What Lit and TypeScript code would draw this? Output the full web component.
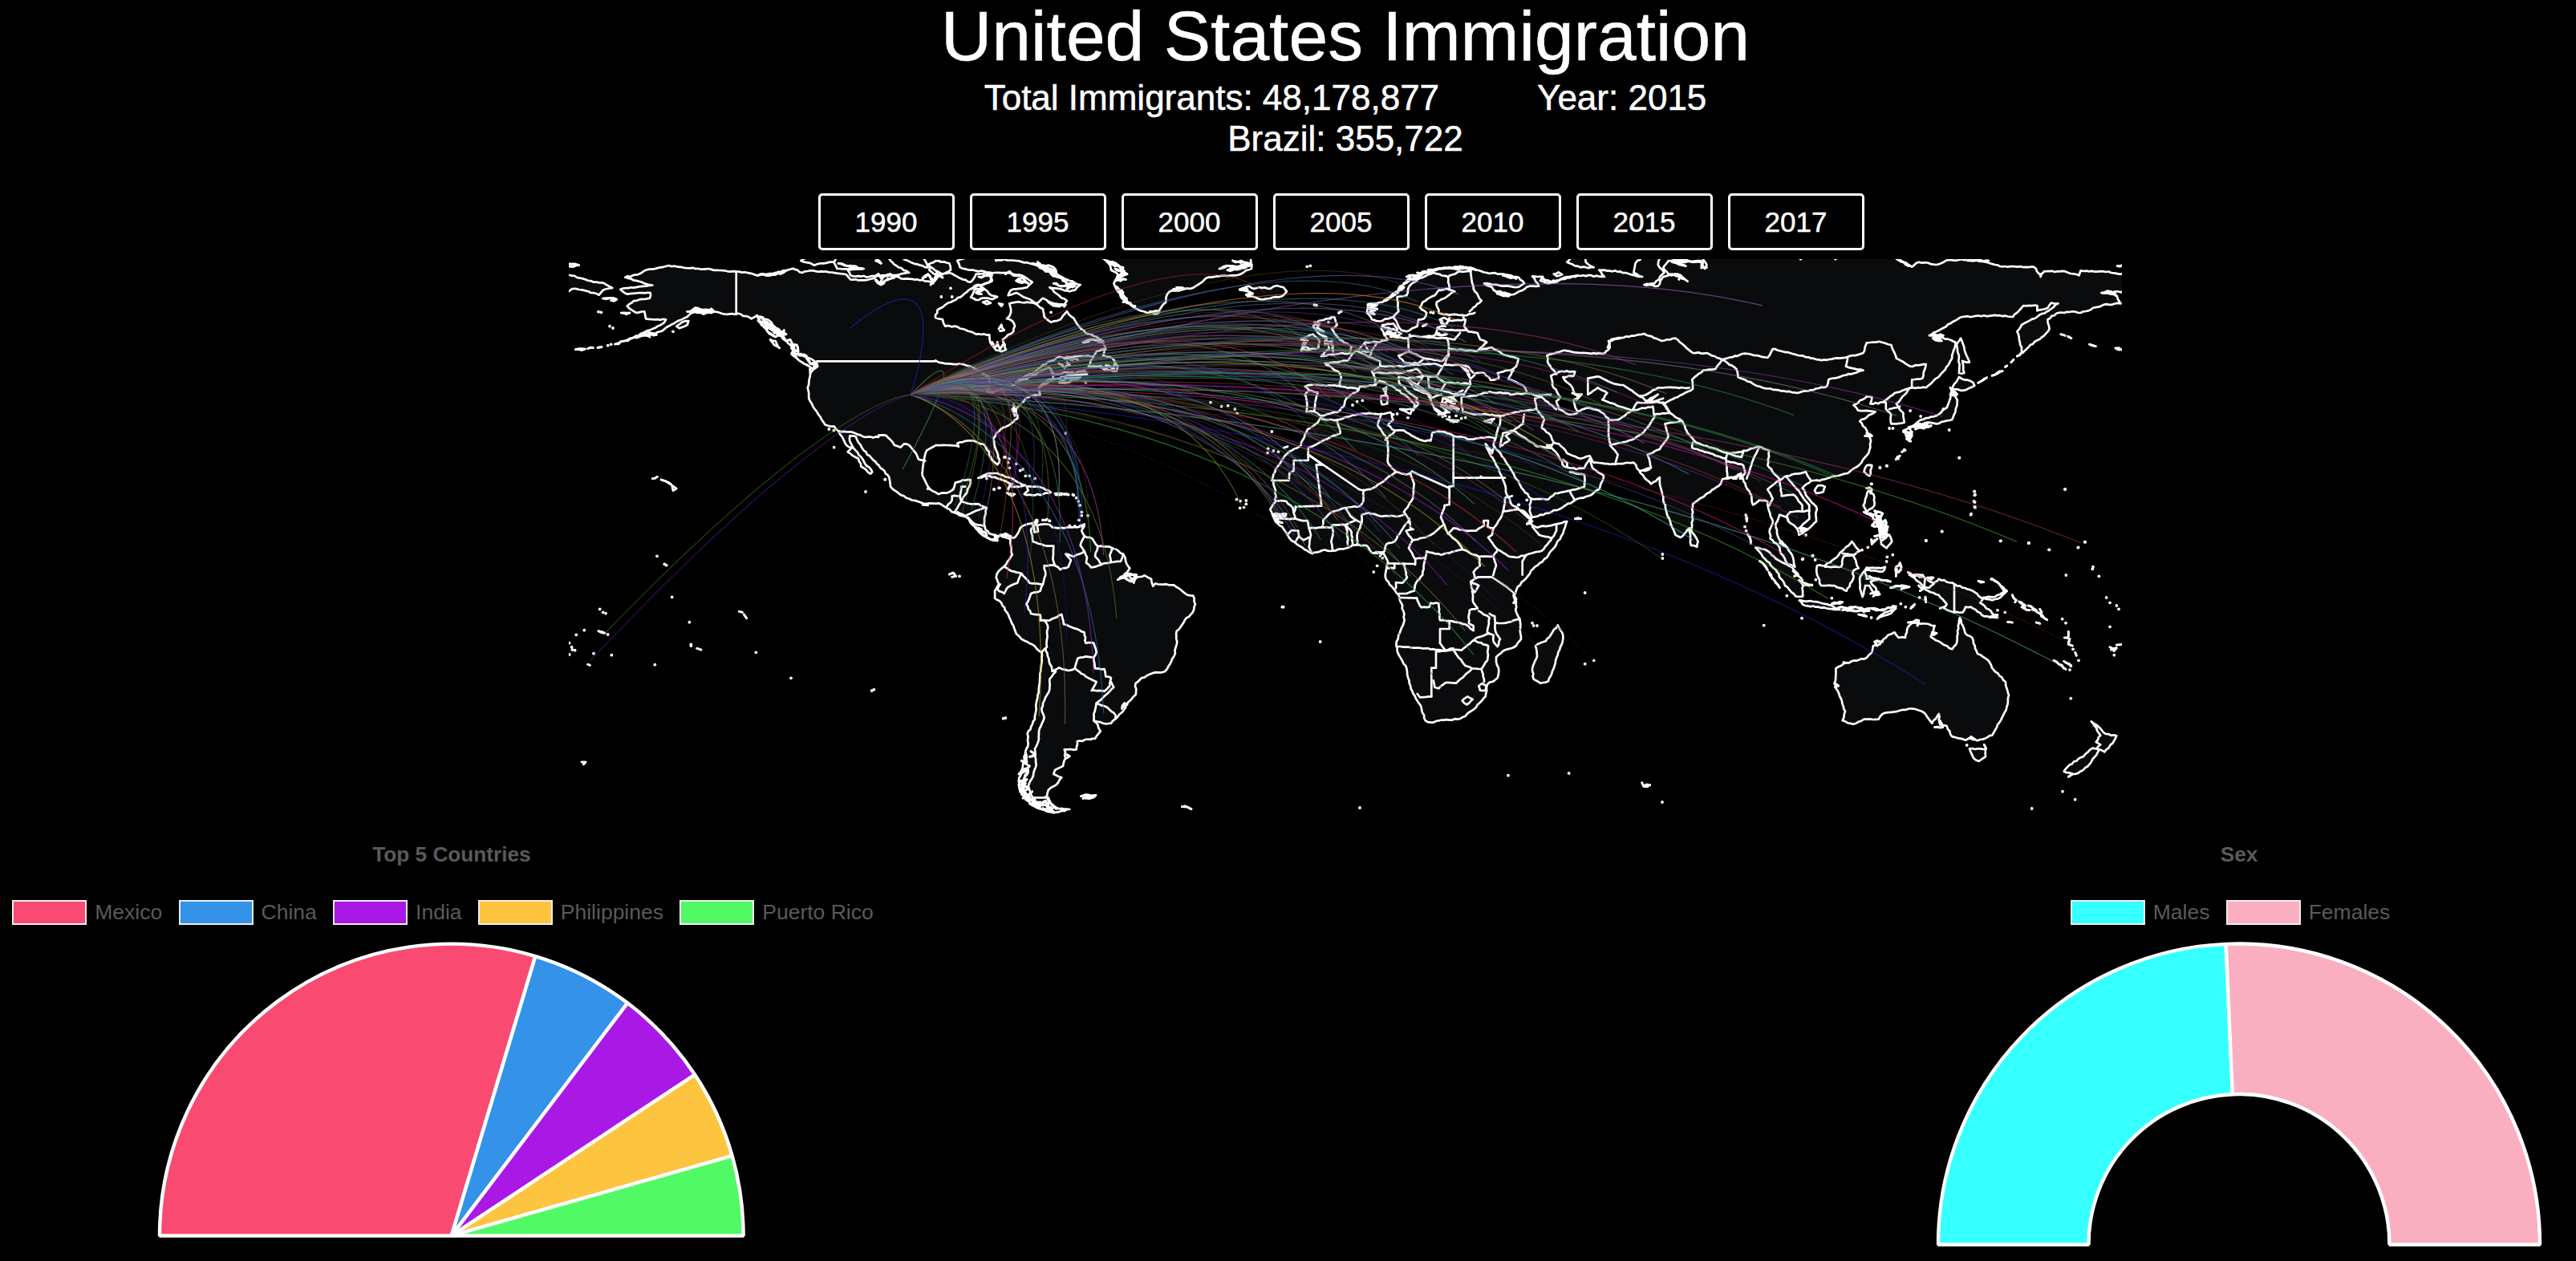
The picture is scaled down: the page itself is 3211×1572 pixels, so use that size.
import { LitElement, html, svg, css } from "lit";
import { customElement, property } from "lit/decorators.js";

/* Survey sheets: every outline is written in the coordinates of its sheet. */
type Sheet = { x: number; y: number; sx: number; sy: number };
const T = 1 / 3;
const SHEETS: Record<string, Sheet> = {
  A: { x: 690, y: 310, sx: T, sy: T },
  B: { x: 1100, y: 310, sx: T, sy: T },
  C: { x: 1520, y: 310, sx: T, sy: T },
  D: { x: 1980, y: 310, sx: 0.43367, sy: T },
  E: { x: 690, y: 600, sx: T, sy: T },
  F: { x: 1150, y: 600, sx: T, sy: T },
  G: { x: 1560, y: 550, sx: T, sy: T },
  H: { x: 2150, y: 540, sx: T, sy: T },
};

let seed = 7;
const rnd = () => {
  seed = (seed * 16807) % 2147483647;
  return seed / 2147483647;
};

function points(line: string): number[][] {
  let s = SHEETS.A;
  const out: number[][] = [];
  for (const tok of line.trim().split(/\s+/)) {
    if (SHEETS[tok]) {
      s = SHEETS[tok];
      continue;
    }
    const [a, b] = tok.split(",").map(Number);
    out.push([s.x + a * s.sx, s.y + b * s.sy]);
  }
  return out;
}

function trace(line: string, close: boolean, rough: number): string {
  const p = points(line);
  if (close) p.push(p[0]);
  let d = `M${p[0][0].toFixed(1)} ${p[0][1].toFixed(1)}`;
  for (let i = 1; i < p.length; i++) {
    const [x0, y0] = p[i - 1];
    const [x1, y1] = p[i];
    const len = Math.hypot(x1 - x0, y1 - y0);
    const n = rough && len < 90 ? Math.floor(len / 3.2) : 0;
    for (let k = 1; k < n; k++) {
      const t = k / n;
      const o = (rnd() - 0.5) * 2 * rough;
      const x = x0 + (x1 - x0) * t - ((y1 - y0) / len) * o;
      const y = y0 + (y1 - y0) * t + ((x1 - x0) / len) * o;
      d += `L${x.toFixed(1)} ${y.toFixed(1)}`;
    }
    d += `L${x1.toFixed(1)} ${y1.toFixed(1)}`;
  }
  return close ? d + "Z" : d;
}

const LAND = `
A 268,107 315,97 345,80 400,70 430,63 465,68 510,73 570,76 640,82 683,86 715,88 760,100 800,95 850,87 895,74 930,90 960,82 1000,85 1060,92 1095,97 1110,115 1160,118 1200,110 1220,130 1235,100 1270,98 1300,112 1360,115 1400,122 1420,130 1430,100 1480,90 B 270,100 300,115 330,125 350,95 385,90 410,95 400,125 350,140 330,150 300,175 265,195 235,210 205,230 198,258 225,265 235,290 270,290 310,303 350,320 400,322 403,350 425,380 445,385 462,378 450,340 470,322 490,310 495,290 485,270 465,262 480,240 475,205 500,200 540,200 570,205 600,225 605,255 630,275 665,265 690,235 715,260 735,290 760,315 800,330 825,345 835,375 820,385 790,400 750,402 700,405 660,405 630,420 600,435 570,460 530,480 500,500 545,483 600,455 625,445 640,475 690,460 700,470 650,488 620,490 600,505 585,520 590,545 555,550 535,560 520,580 500,600 505,635 480,655 450,670 425,690 415,710 420,740 432,770 438,790 430,808 410,790 398,760 380,732 350,722 320,718 280,728 285,740 240,735 200,735 165,755 155,790 150,850 165,880 185,905 210,918 250,910 265,900 272,875 300,865 330,865 325,890 310,920 295,945 330,955 360,955 390,970 383,1000 380,1030 385,1050 400,1065 430,1075 460,1065 485,1080 F 335,222 310,210 290,202 265,218 230,205 200,178 165,135 120,118 90,100 60,82 30,82 0,88 A 1400,960 1330,935 1290,915 1260,890 1255,855 1230,825 1195,790 1160,755 1140,725 1130,703 1108,700 1108,720 1130,755 1160,795 1192,835 1185,842 1150,815 1140,785 1100,760 1115,745 1095,735 1080,705 1065,682 1050,665 1015,658 990,620 970,590 955,560 950,520 960,465 960,440 930,425 890,395 900,370 870,345 850,310 800,265 760,250 740,262 700,245 630,243 590,232 540,225 500,255 450,280 400,310 350,325 300,332 370,300 415,275 420,265 380,265 345,262 340,235 310,240 285,225 275,215 300,195 360,185 362,165 330,165 275,170 250,152 290,145 345,140 370,137 330,125
A 40,92 57,98 100,110 130,120 150,125 190,130 220,147 185,155 170,173 130,160 95,153 70,150 57,160 40,160
B 425,45 455,40 500,45 550,55 590,60 625,75 660,100 700,120 740,135 720,155 700,160 660,150 625,145 660,175 690,195 680,212 640,205 600,185 575,205 540,185 500,165 470,175 480,155 540,145 560,125 530,105 490,95 450,90 420,90 380,85 330,80 290,70 280,45 320,30 420,30
A 1045,45 1060,75 1160,75 1100,80 1110,100 1180,105 1230,100 1290,98 1330,90 1290,70 1260,45 1250,30 1050,30
A 925,45 975,62 1010,55 1050,50 1060,30 950,30
A 1310,40 1370,62 1400,70 1390,45 1380,30 1310,30
A 1405,80 1430,97 1450,70 1480,68 1440,45 1415,60
B 330,182 350,150 380,150 400,170 430,180 410,190 380,185 350,192
B 375,200 390,195 405,203 390,208
B 435,205 450,208 445,215
B 200,45 250,55 255,80 225,95 190,75 170,60
B 770,440 785,410 800,385 830,375 825,400 860,410 880,440 875,458 830,455 820,440 790,440
B 820,30 850,60 855,80 880,95 865,130 880,160 900,190 930,212 960,230 1000,240 1030,243 1045,215 1060,200 1065,170 1090,150 1150,150 1180,135 1210,110 1260,103 1330,98 1380,75 1375,30
C 75,152 110,140 130,150 150,145 190,150 215,138 240,145 252,160 235,178 200,182 165,190 135,182 105,178 120,165
A 890,390 930,400 975,420 988,440 975,450 930,425
A 810,340 830,345 845,372 825,360
A 460,290 480,275 505,270 500,285 470,298
B 358,858 395,840 430,840 470,855 500,870 535,885 500,890 475,888 485,880 440,862 400,850
B 530,918 545,905 540,890 570,890 600,895 630,912 600,918 560,922
B 465,913 495,918 485,925
B 645,915 672,915 670,921 648,921
A 443,885 460,897 447,905
F 325,210 345,210 365,175 385,163 415,155 430,145 412,165 418,190 432,188 428,165 455,160 475,162 485,172 530,175 580,172 605,160 595,185 605,205 635,215 655,243 700,245 725,255 750,272 760,300 775,325 765,340 730,368 770,352 790,380 800,360 830,352 855,365 862,392 870,382 940,388 965,405 990,425 1012,428 1020,460 1010,490 980,520 960,552 950,560 950,610 940,655 920,690 905,712 860,718 820,735 797,755 797,798 770,825 745,865 720,890 705,905 675,905 640,895 655,910 665,935 645,962 578,972 575,1003 530,1003 535,1035 525,1065 495,1080 490,1095 520,1108 500,1135 470,1155 465,1180 480,1205 510,1225 550,1227 490,1240 430,1220 385,1190 365,1160 360,1120 375,1060 385,1010 395,980 392,945 420,890 425,830 437,760 445,680 445,640 410,610 370,590 350,570 340,540 315,490 295,455 270,437 270,410 285,385 275,360 285,335 305,318 335,275 330,240
C 378,632 368,650 330,675 312,715 305,735 255,765 235,790 210,825 198,862 210,905 210,945 190,975 200,1000 G 80,280 90,300 115,320 135,350 150,372 180,392 228,420 265,408 305,410 345,403 390,388 430,390 450,418 490,415 510,450 505,475 500,500 505,520 530,550 550,575 560,605 568,635 572,670 555,715 542,750 545,785 580,850 590,905 605,945 635,995 650,1045 670,1052 720,1043 770,1040 800,1028 840,995 875,955 882,910 920,885 925,860 915,825 915,808 950,780 990,765 1008,740 1005,700 1003,665 990,640 990,600 980,580 995,545 1020,520 1060,470 1105,435 1140,385 1165,345 1180,300 1140,310 1070,323 1045,310 1045,290 1020,265 975,240 955,200 945,155 935,130 915,90 890,45 875,10 C 1000,735 1020,765 1030,740 1032,710 1000,705 940,713 875,700 840,685 815,683 795,690 790,718 770,720 720,700 690,680 655,680 630,660 650,640 640,612 605,618 560,615 500,622 440,640 400,640
G 1145,688 1165,725 1160,760 1145,800 1125,860 1110,898 1080,905 1055,890 1050,850 1068,805 1062,765 1100,748 1125,715
C 378,625 355,610 325,610 328,580 320,545 335,530 320,515 350,508 400,513 450,512 455,480 445,460 400,435 395,428 440,425 480,418 500,390 520,380 545,350 590,350 630,340 605,300 610,285 650,280 665,300 655,330 700,335 725,325 760,330 805,325 815,295 830,290 845,290 825,265 840,258 870,270 915,265 910,248 860,248 820,240 812,200 850,180 880,160 850,150 820,155 805,175 760,200 750,220 775,240 765,262 745,265 740,290 700,310 680,305 665,280 650,255 600,272 570,265 552,240 555,208 610,200 650,170 700,125 750,95 830,75 890,68 950,75 1000,90 1060,95 1120,108 1140,130 1120,143 1060,140 990,130 1020,145 1040,170 1080,178 1120,160 1160,140 1195,140 1170,103 1210,105 1200,120 1230,130 1300,108 1360,100 1440,105 1420,80 1500,85 D 92,87 155,105 130,90 135,55 160,25 205,25 200,60 218,90 190,130 160,135 200,140 215,105 240,95 260,105 285,122 265,100 230,95 215,70 230,45 280,65 240,50 300,48 325,50 335,75 340,60 320,20 890,20 885,38 930,68 950,50 1000,60 1035,42 1110,42 1190,67 1280,68 1300,100 1310,85 1370,85 1410,100 1415,82 1480,85 1532,95 1560,98 1560,160 1475,165 1515,170 1530,205 1480,210 1415,240 1390,235 1345,242 1320,265 1325,300 1310,325 1270,360 1248,390 1240,350 1232,310 1245,285 1290,255 1330,225 1350,205 1330,203 1320,222 1290,232 1290,213 1250,213 1220,255 1160,250 1075,255 1040,280 980,325 1010,330 1055,350 1045,410 1020,460 970,520 925,520 910,545 885,580 905,615 908,650 870,655 870,620 855,600 855,575 810,580 815,555 800,553 762,585 775,605 825,610 780,645 800,680 812,720 805,765 785,800 745,840 710,850 665,868 640,868 615,895 630,930 655,965 655,1020 630,1050 605,1070 600,1048 575,1020 570,1005 H 205,305 190,340 195,375 205,400 235,430 255,465 262,500 235,490 210,450 200,420 170,395 168,360 180,330 165,290 160,255 130,250 105,268 100,235 70,180 60,150 30,165 0,170 D 385,862 380,880 300,955 297,1045 285,1050 265,1080 250,1070 225,990 205,880 205,855 180,880 150,840 130,800 70,805 15,800 C 1395,795 1385,775 1350,785 1300,765 1270,730 1250,725 1240,740 1265,770 1290,815 1335,825 1365,820 1385,785 1395,820 1437,850 1420,900 1380,925 1330,940 1270,975 1170,1005 1160,980 1165,935 1130,895 1090,825 1065,785 1035,750 1025,735 1040,680 1050,650 1050,625 1000,620 950,620 910,610 905,580 905,555 950,550 1010,535 1100,545 1150,540 1140,515 1080,488 1100,455 1080,455 1040,465 1045,485 1015,492 990,465 960,465 940,485 935,515 915,545 880,550 865,570 835,560 830,590 850,605 830,620 805,600 790,565 780,545 730,525 700,485 670,480 672,500 700,530 740,560 735,570 745,580 725,605 730,580 690,545 655,520 625,505 600,495 575,512 525,515 520,530 475,560 465,590 440,612 400,620
C 370,270 430,255 440,285 420,300 450,340 495,365 490,390 450,392 380,402 410,375 400,330 375,320 350,290
C 310,335 350,320 375,345 370,372 305,380 320,360
C 630,315 650,300 680,318 655,330
C 675,600 720,600 715,618
C 605,550 628,550 628,580 608,583
C 612,525 625,518 622,545
C 850,638 895,642 890,648
C 990,645 1028,636 1015,652
C 1300,50 1350,70 1400,70 1370,50 1370,30 1320,30
C 1250,95 1268,88 1282,97 1262,103
D 290,1045 315,1095 312,1115 295,1110
D 650,905 660,885 680,890 675,910 655,915
D 800,810 815,810 808,850 792,835
D 805,905 820,920 822,960 800,985 790,960
D 1065,480 1105,500 1110,512 1080,530 1045,525
D 1045,530 1060,565 1055,610 1045,640 1000,655 975,650 930,665 955,640 1000,625 1030,595 1040,560
D 905,680 925,670 930,700 922,720
D 1070,335 1080,370 1095,425 1075,420 1080,465 1065,465 1065,400 1058,360
H 580,390 615,380 625,405 605,430 585,415
H 345,495 375,495 410,470 440,440 475,405 505,440 480,460 500,505 480,515 480,545 455,590 410,570 360,570 345,530
H 115,428 150,435 200,475 250,500 290,550 292,610 265,610 225,570 190,510 150,470
H 278,625 330,630 400,645 430,660 380,655 300,645
H 525,512 590,518 600,500 585,505 530,503 505,540 505,580 515,612 525,570 540,570 560,605 580,603 545,555 575,545 530,545
H 690,530 740,530 750,545 745,575 765,578 800,545 860,565 935,595 965,620 955,635 1010,680 1020,690 970,685 920,650 900,650 890,670 855,670 820,655 830,640 800,605 750,585 735,565
H 965,615 1010,612 1045,592 1030,570 1055,590 1030,615 1000,625
H 570,695 600,670 640,655 620,675
H 415,880 445,862 530,840 550,820 555,795 580,790 610,755 635,745 650,765 675,765 685,725 700,710 740,712 785,720 780,740 770,762 810,785 850,808 865,790 870,740 878,690 900,750 925,765 945,825 985,850 1005,885 1050,930 1062,980 1052,1035 1020,1090 1000,1130 945,1150 915,1140 900,1148 850,1135 830,1095 805,1090 800,1050 775,1085 745,1045 700,1030 655,1037 590,1050 575,1070 520,1070 480,1088 440,1075 450,1040 430,985 410,935 415,905
H 915,1180 975,1182 975,1210 950,1227 930,1215
H 1370,1078 1400,1100 1425,1125 1465,1132 1450,1160 1420,1192 1390,1180 1405,1165 1388,1155 1405,1130
H 1375,1178 1400,1185 1370,1230 1340,1260 1310,1275 1268,1265 1290,1240 1340,1210
`;

const INLAND_SEA = `
C 1240,475 1280,458 1330,460 1325,475 1285,480 1300,500 1320,520 1330,545 1355,545 1325,565 1338,615 1310,620 1270,600 1260,570 1275,555 1245,510
`;

/* Straight, surveyed frontiers. */
const STRAIGHT = `
A 683,86 683,243
A 985,421 1428,421
C 875,700 875,888 858,890 858,895
C 875,857 1068,857
C 332,770 522,900
C 385,808 362,808 382,962 285,965
C 332,770 385,808
G 76,147 140,147 142,120 158,110 158,72 212,72 212,50
C 720,833 858,895
G 740,175 740,237 722,240
G 512,457 612,459
G 690,787 690,848 673,848 673,955
G 900,508 848,508
G 900,508 955,545 985,570
G 1013,450 1013,500
H 858,565 858,670
C 1378,545 1378,485
G 740,672 740,702 705,702 705,755
G 553,585 618,587
F 410,1183 470,1183 470,1230
`;

const BORDERS = `
A 1428,418 1440,425 B 235,430 300,432 330,440 370,462 400,480 400,510 390,535 410,538 450,520 490,512 500,500
B 585,520 640,488 630,450
A 1065,682 1110,685 1165,705 1215,705 1215,698 1243,698 1265,720 1275,735 1298,743 1310,730 1330,735 1355,765 1365,788 1390,793
B 240,965 260,940 260,925 290,925 295,945
B 290,925 295,890 310,890
B 270,985 285,960 295,945
B 280,985 310,1000 330,990 350,980 385,968
B 320,1005 345,1030 380,1037
B 440,1070 480,1075
F 430,150 405,180 412,225 455,240 490,242 487,290 495,315 455,315 460,350 450,385
F 305,320 330,335 370,345 400,380 450,385 440,410 405,420 388,460 405,495 440,500 440,520 475,520 520,498 528,535 605,565 610,605 640,605 650,640 640,658
F 370,345 355,380 320,395 305,420 280,405 290,385
F 455,520 468,540 465,590 465,620 445,640
F 460,625 485,710 510,697 545,708 570,700
F 570,700 580,662 610,655 640,658 645,700 680,702 685,730 705,735 700,765 680,785 632,783 650,750 610,730 570,700
F 705,750 715,770 690,795 650,830 640,870 640,895
F 650,830 690,845 722,875 720,890
F 485,710 498,712 475,740 475,780 455,820 445,850 455,885 435,935 435,965 420,1000 425,1060 410,1110 395,1140 410,1180
F 495,315 515,330 545,320 555,295 535,272 565,282 605,262
F 605,205 590,240 605,262 615,285 612,305 630,322 670,312 645,280 655,243
F 670,310 705,303 700,275 710,250
F 705,303 740,300 750,272
C 440,640 452,690 415,705 332,745 332,770
C 540,905 575,895 660,835 700,845 720,833
C 522,900 540,905
C 605,618 592,660 620,700 630,725 630,800 660,835
C 620,715 655,685
G 722,240 708,285 722,315 735,345
G 595,122 608,160 603,215 570,265
G 570,275 545,282 480,280 440,268 412,275 412,305
G 420,182 418,225 405,243 345,250 300,265 268,295 265,322 300,322 305,313 350,313 380,300 390,295 370,280 350,250
G 390,295 412,305 395,350 395,388
G 378,388 374,340 355,315
G 360,388 358,335 350,315
G 305,410 298,375 305,340 300,315
G 228,420 215,395 222,350 215,325 210,297 180,295
G 215,325 240,325 265,322
G 90,222 130,225 155,250 165,290
G 85,272 130,272 128,280 85,280
G 90,290 165,290 180,295
G 165,243 160,265
G 135,350 150,333 175,335 178,355 165,375
G 178,355 195,370 215,360
G 495,415 505,385 535,375 560,335 590,295 570,265
G 590,290 595,325 605,330 578,335 602,370 650,360 680,345 715,315
G 602,370 588,400 612,440 612,462
G 735,345 770,375 790,405 850,432 905,430 920,405
G 650,440 655,412 710,425 790,405
G 508,475 535,475 535,457
G 570,457 575,480 582,510 565,530 540,528 540,550
G 612,440 650,435 640,500 615,530 608,560 580,570 550,570
G 618,587 635,622 665,620 670,605 700,607 705,670 740,672 800,685 830,708 830,690 812,680 815,632 845,625
G 705,755 722,778
G 542,768 570,770 650,775 720,783 755,775
G 673,955 630,958 620,945
G 690,787 755,780 775,810 800,840 825,850 765,905 725,903 700,925 685,920 680,895
G 755,780 785,782 830,745 885,765 882,820 860,852 825,850
G 830,745 842,735 890,720 882,715 890,660 850,635
G 890,645 910,655 912,710 930,740 920,768 905,750 905,725 890,720
G 912,680 950,680 1003,665
G 848,508 835,515 830,490 855,465 850,432
G 900,508 915,465 905,430
G 835,515 820,525 850,540 835,565 822,545 820,525
G 825,560 828,600 845,625
G 735,345 755,325 800,335 840,335 870,315 868,297 885,297 882,320 905,325 900,350 885,360 920,405 960,430 990,435 1028,425 1013,450
G 1028,425 1085,410 1120,370 1140,335 1140,310
G 1120,362 1075,350 1050,320
G 905,325 930,290 943,255 950,210 975,205
G 943,262 1000,255 1045,295
G 860,852 870,900
G 850,915 862,906 878,915 875,932 855,932 850,915
G 788,970 808,955 827,965 805,985 788,970
C 450,515 520,525
C 335,530 368,538 358,575 355,610
C 520,385 560,405 600,420 600,440 570,460 580,480 585,510
C 590,350 570,380 560,405
C 545,360 560,385 520,385
C 705,335 710,385 670,400 690,425 740,430 765,410 735,395 710,385
C 765,410 835,420 858,395 855,345 850,335 760,330
C 858,375 965,382 1000,350 975,340 965,315 930,310 915,290 920,265
C 845,335 880,340 900,315
C 815,300 890,305 925,305
C 940,85 950,150 980,195 935,235
C 915,250 955,240
C 650,255 670,235 665,180 700,175 710,140 750,110 800,90 855,105
C 860,155 855,105 900,85 940,85
C 970,380 1020,370 1060,395 1118,412 1110,440 1090,455
C 858,400 840,435 900,435 935,470
C 900,435 930,440 950,465
C 840,500 930,505
C 740,435 800,430 835,440 810,480 760,475 740,450
C 780,480 785,520 830,530 845,505 810,475
C 835,530 880,545 910,530
C 790,560 830,545
C 700,485 760,480 740,510 780,540
C 740,510 700,490
C 580,465 620,465 680,465 740,450
C 600,440 640,440 680,440 740,432
C 1185,600 1120,610 1050,625
C 1145,540 1190,550 1240,545
C 1185,600 1180,560 1205,555 1260,600
C 1185,600 1215,640 1205,670 1240,700 1250,725
C 1140,620 1135,655 1100,680 1060,690 1050,740 1085,715 1070,700 1100,680 1190,740 1240,745
C 1165,935 1230,938 1255,915 1310,905 1365,890 1365,845 1310,835
C 1310,905 1328,942
C 1260,470 1230,430 1225,400 1290,380 1350,390 1440,392 1460,370 1455,345 1500,335
D 55,370 65,340 160,318 210,345 250,335 300,390 340,390 385,415 365,450 330,455 298,490 300,525 270,545 215,580
C 1378,485 1415,478 1475,505 1500,510 D 100,510 150,555 200,520 290,520
C 1378,545 1415,520 1450,540 D 40,565 90,590 125,605
C 1338,610 1375,595 1420,605 1455,635 1455,700 1465,740 1490,770 1480,805
D 60,640 85,640 125,605 185,590 190,630 160,685 125,715 62,735
D 125,605 140,575 215,575 235,615 190,620
D 150,550 165,570 200,545 175,575 215,560
D 385,415 450,392 515,408 530,375 610,400 670,418 745,405 740,440 790,455 690,490 685,515 600,540 500,520 430,480 425,450 385,415
D 745,405 790,390 800,352 835,347 870,360 885,410 925,440 970,432 960,485 930,490 930,520 880,540 850,570
D 865,600 895,590
D 215,580 235,615 270,645 285,690 310,725 400,765 440,760 490,740 520,755 515,810 550,865
D 265,645 220,655 230,700 205,750 170,770 180,820 150,830
D 300,725 298,745 395,785 400,765
D 400,765 440,780 445,760
D 395,785 400,860
D 400,795 445,810 450,840 435,860
D 490,745 470,800 455,860
D 550,865 515,900 530,935 520,960
D 550,865 570,850 625,835 640,868
D 550,865 555,925 590,920 615,960 615,980
D 570,855 600,900 635,960 635,1010 605,1045
D 575,1020 570,1000 580,985 635,980
H 375,500 435,500 445,460 480,455
H 440,450 480,455
H 205,410 235,430
`;

/* Fjords, archipelagos and island chains. */
const SCRIBBLES = `
A 760,250 775,280 790,268 800,300 815,280 825,315 840,300 850,325 862,305
A 765,270 800,310 830,330 870,320 810,300 840,320 775,255
A 850,325 870,345 885,340 890,365 910,360 915,385 890,372 905,395 945,400 960,430 985,430 960,465
A 500,235 540,222 560,245 600,235 590,225 550,240 520,230
A 300,332 330,325 350,310 385,322 340,320 360,330
A 298,333 265,345 230,357
A 180,368 165,370
A 148,371 128,374
A 118,375 82,377
A 185,186 210,185 236,190 215,194
A 253,240 285,240 270,245
A 57,57 80,57 95,62 75,67 57,66
A 765,100 785,95 810,100 830,90 850,94 870,82 820,98
A 1200,105 1215,95 1225,110 1260,95 1275,108 1240,120 1225,135 1205,120
A 1380,110 1400,95 1420,120 1410,135 1440,100 1455,108
A 1065,55 1100,65 1150,73
A 1205,45 1225,55 1210,40
A 370,860 388,853
A 402,864 420,870 440,882
B 335,150 360,135 380,150 350,165 370,170
B 360,105 400,100 410,120 385,130 355,135
B 460,95 475,85 490,100 520,100 545,130 500,120 520,110
B 560,55 600,75 640,80 630,95 670,110 700,140 720,140
B 580,50 610,85 650,90 640,70 600,62
B 640,130 680,140 720,130 690,150
B 620,200 650,215 685,210
B 850,50 880,60 905,85 880,110 915,95 870,75
B 840,45 870,65 900,70 890,100 870,120 910,115
B 870,140 900,165 890,175 915,200 945,215
B 885,155 905,180 920,205 900,200
B 1000,235 1035,235 1015,245
B 1260,75 1300,65 1340,75 1290,80 1350,60 1375,55
B 1310,45 1350,50 1380,60
B 1100,145 1130,150 1085,158
B 470,900 475,888
B 410,350 420,370 430,350 440,375 450,360
B 435,300 445,285 455,305 440,308
B 490,580 490,610 500,600 485,600 495,625
B 690,465 720,468 755,455 765,470 700,475
B 660,500 690,500 740,480 700,485 665,490
B 815,445 840,450 835,435 865,450 870,425
B 660,430 680,445 700,435 690,425
B 750,350 790,340 825,350
B 680,410 730,415
B 345,1040 375,1060 360,1045 390,1070
F 205,180 235,205 250,215 280,222 270,205
F 590,165 605,165 600,175
F 735,365 770,345 800,350 780,375 755,360
F 385,1015 390,1050 370,1045 400,1065 360,1095 395,1080 380,1110
F 360,1120 390,1115 370,1135 395,1150 365,1160 400,1180 375,1185
F 365,1150 385,1165 395,1195 420,1190 410,1210 440,1200 430,1220 460,1195 470,1225 490,1235 440,1225 400,1205 450,1210
F 362,1125 385,1130 368,1148 388,1178 405,1190 430,1205 460,1210 485,1225
F 405,1010 420,1020 400,1030
F 360,1135 380,1140 370,1170 390,1180 410,1160
F 592,1178 610,1172 630,1176 648,1174 630,1185 600,1186 615,1180 640,1180
F 970,1217 990,1218 1005,1226
F 535,1020 550,1028 540,1035
F 460,1180 475,1195 500,1225
F 745,850 755,830 765,835
C 555,210 590,210 560,225 590,225 562,238 580,245
C 620,195 660,165 640,180 690,145 670,150 715,110 700,120 760,95 740,90 800,85 780,80 850,72 880,75 940,72 960,80 900,66
C 700,105 735,100 725,115 750,105
C 355,275 375,280 365,295 390,310 375,305
C 305,340 330,345 310,360 335,375
C 385,325 400,335 395,360 420,345 425,385
C 610,290 640,300 620,320 660,315 640,330 670,325
C 810,320 850,320
C 825,265 835,285 850,280 860,260
C 760,290 775,282
C 1060,100 1110,112
C 1040,160 1070,165 1050,172 1085,170
C 1210,112 1240,125 1270,118 1310,105 1340,100
C 700,488 730,505 750,525 790,550
C 840,560 870,555 885,570 850,570 880,580 860,590 895,600
C 830,590 845,575 850,595 865,600
C 810,600 830,615 860,612
C 1320,540 1345,555 1335,565
C 78,155 105,152 85,148
C 100,172 125,168
C 205,1000 240,1000 210,1020 235,1025
C 240,745 255,740
C 1330,1010 1352,1010
C 1240,735 1225,735 1235,745
C 1285,790 1300,800 1300,815
C 920,440 935,480 930,465
C 1135,980 1165,1010 1150,1030 1170,1020
C 10,70 50,65 100,70 60,75 120,60
G 460,418 490,418 480,430
G 980,575 990,590 980,605
G 1460,1277 1466,1290 1478,1284 1490,1286 1470,1292
D 985,322 1020,325 990,335 1015,345 1000,330
D 1300,95 1300,105
D 1475,165 1500,160 1515,175
D 890,40 905,50 925,65
D 1090,45 1150,45
D 230,95 265,100 260,115
D 240,45 275,62
D 245,40 330,50 325,72 340,70
D 1040,520 1060,545 1040,545
D 905,685 925,690 915,710 930,685
D 940,675 985,662 950,668
D 920,668 975,655 940,660
D 1232,402 1245,388
D 1215,425 1222,415
D 1198,442 1203,438
D 1160,475 1190,458
D 1120,502 1145,482
D 1358,320 1370,325
D 1378,328 1388,335
D 1440,358 1458,365
D 1515,372 1532,378
D 1520,65 1535,62
D 800,690 815,700 795,700
D 395,860 410,855 425,860 430,845 440,860
D 155,830 175,825
D 630,1050 610,1045 615,1065
H 520,295 545,300 555,320 580,345 600,325 605,370 580,375 570,340 590,300 560,290 570,320 550,345 590,350 600,375 560,385
H 540,305 580,310 585,340 610,350 580,360 610,380 590,400
H 548,398 550,415 570,395
H 530,205 550,210 545,225
H 130,478 145,490 160,512
H 165,520 185,550 205,578
H 278,550 300,568 325,568 295,560
H 255,515 275,530 260,535
H 425,652 460,655 490,650 520,660 545,655 580,662 640,648
H 440,662 500,665 540,665
H 500,678 530,685
H 545,600 575,595 555,610
H 540,535 575,545 600,550 620,555
H 620,578 650,572 690,575 660,583
H 640,535 640,500 655,485 660,500 650,520
H 685,520 700,535 720,530 750,545 780,540 760,550 780,560
H 725,570 745,580 730,590
H 750,612 752,632
H 695,655 710,640
H 400,638 440,632
H 1075,605 1090,625 1085,632
H 1100,630 1125,645 1110,650 1140,662
H 1135,645 1165,662
H 1150,660 1180,675 1195,692 1205,698
H 1178,658 1185,670
H 1230,850 1250,865 1275,883
H 1268,853 1295,870
H 1285,742 1285,760
H 1270,765 1290,770 1285,790 1300,795
H 1310,820 1315,832
H 1440,800 1455,815 1465,803 1445,810
H 1465,792 1485,790
H 1058,706 1075,708
H 1165,708 1178,712
H 948,553 968,557
H 1000,545 1030,568
H 990,688 1020,680
H 410,935 425,945 412,950
H 570,795 560,780 590,780
H 775,745 792,748 780,755
H 685,708 725,700 720,720
H 785,1100 815,1100 805,1075
H 920,1135 935,1145
H 970,1165 977,1180
H 820,650 805,655
H 680,22 695,30
H 640,98 655,85
H 662,70 675,64
H 1285,1285 1300,1275
H 78,305 82,330
H 85,378 97,412
E 168,560 192,568
E 694,487 706,490
E 712,498 722,512
E 536,625 552,630
E 105,1050 120,1050 112,1058
E 128,685 136,688
F 100,348 115,342 125,355 110,358
`;

const DOTS = `
A 168,236 178,238 210,290 222,297 215,358 203,362 447,310 1049,743 1240,863 1167,909
A 1450,180 1490,180 1485,148 1030,675 1048,680
B 630,238 680,215 10,863 418,900 438,895 680,918 688,918 712,920 725,932 733,945 738,960 745,985 735,1015 768,998
B 460,780 475,785 470,800 475,820 500,805 515,830 535,850 550,850 570,860 525,825 685,690 455,780
B 390,860 1227,575 1268,590 1292,587 1318,600 1326,616 1456,684 1442,748 1440,764 1462,756 1480,760 1324,938 1338,944 1360,942 1360,955 1337,970 1352,967
B 760,500 575,1015 600,1015 615,1012 625,1018 700,1036 720,1038
F 20,28 285,25 267,30 138,355 302,887 310,885 460,145 475,148 595,128 545,50 565,52
C 328,67 340,64 355,210 363,212 447,240 455,235 415,260 408,275
C 498,585 515,572 535,568 650,620 665,618 705,632 845,625 860,630 885,625 905,635 920,632 875,648 865,645 820,620 835,628 875,590 890,605 800,240 790,238 712,322 770,285
C 978,853 1118,958 1150,940
G 490,437 470,466 457,489 119,620 257,750 1247,567 1050,680 1055,690 1068,690 1247,833 1280,820 1000,238 405,1371 960,1250 1187,1242 1536,1350
D 925,606 955,627 1037,678 908,752 890,785 838,820 858,812 814,880 1066,782 1370,900 1110,908 1110,922 1108,945 1110,966 1100,992 1016,1057 970,1092 1185,1093 1266,1101 1324,1126 1427,1097 1408,1117 1020,600 865,672 875,672 213,1143 213,1158 615,1162 645,1148 610,38 710,38
H 877,92 1272,210 933,218 936,230 935,258 936,278 920,305 812,368 753,402 1031,403 1136,411 1213,436 1347,407 1321,428 1377,500 1375,508 1276,531 1399,535 1440,724 1294,992 1294,870 1263,1340 1310,1370 1148,1404 146,719 288,692 232,608 1427,615 1440,634 1465,645 1473,658 1020,662 1048,670 1262,695 1275,710 1290,885 1323,850 1456,830 1302,808 905,1167 445,858 628,455 607,463 605,480 292,470 328,458 338,474 303,381 513,437 535,427 548,690 658,638 676,650 728,615 75,350 80,365 325,568 400,617 340,548 548,190 580,128 605,122 997,546
E 387,280 415,310 422,314 443,433 173,478 185,490 195,494 115,557 85,574 508,527 514,610 514,615 757,640 150,644 217,650 379,686 888,736 1190,783 1198,779 68,620 70,630 80,632 203,573 59,648 59,605
F 1345,470
`;

/* Destination [longitude, latitude, colour, strength]. */
type Route = [number, number, string?, number?];
const ROUTES: Route[] = [
  [-114.8, 56.7, "#1b2bb5", 0.65], [-102.6, 24, "#3a9a4c", 0.65], [-172, -14.4, "#3d8a10", 0.5], [-175, -20.3, "#6a1bb0", 0.5],
  [134.5, -25.8, "#1c2ee0", 0.5], [96.7, 61.9, "#b070d0", 0.55], [104, 36.5, "#2f9a50", 0.55], [138.5, 36.2, "#9040a8", 0.6],
  [127.8, 36.4, "#8a958a", 0.55], [167, -15.8, "#6b1520", 0.4], [165, -21, "#57b09a", 0.6], [112, -6, "#48b81c", 0.6],
  [155.7, 7.2, "#4b9a2a", 0.65], [170.5, 7, "#a03070", 0.6], [122.9, 12, "#d01090", 0.65], [-18.6, 64.9, "#9a201c", 0.6],
  [-53, -10.5, "#4f8a20", 0.6], [-65, -35, "#8a6a45", 0.65], [-71, -33.2, "#b39a20", 0.65], [-56, -32.6, "#2a6aa8", 0.65],
  [-58.4, -23.2, "#8a2ac0", 0.65], [-64.7, -16.5, "#181860", 0.6], [-74.4, -9.2, "#4a18b0", 0.65], [-78.5, -1.3, "#c02a68", 0.65],
  [-73, 4, "#356a48", 0.5], [-66.2, 7.1, "#2f7a50", 0.65], [-59, 4.8, "#4f9a20", 0.65], [-56, 4.1, "#c040a0", 0.6],
  [29.8, -19, "#2f9a35", 0.7], [27.8, -13.4, "#7a7a25", 0.6], [23.6, -2.8, "#8a1fc0", 0.65], [32.4, 1.4, "#b0a820", 0.6],
  [37.9, 0.5, "#8a1fb8", 0.65], [39.7, 4.8, "#c03028", 0.65], [-24, 15.6, "#7a8020", 0.65], [-64.7, 32.3, "#305038", 0.4],
  [-3.5, 40.3, "#c02838", 0.65], [-1.5, 53], [-8, 53], [2.5, 46.5], [10, 51], [12.5, 42.8], [-8.2, 39.6], [5.3, 52.2], [4.6, 50.6],
  [8.2, 46.8], [14.1, 47.6], [15.3, 49.7], [19.4, 52.1], [19.5, 48.7], [19.4, 47.2], [25, 45.9], [25.2, 42.8], [22, 39.3], [20, 41.1],
  [20.8, 44.2], [16.4, 45.2], [17.8, 44.2], [14.8, 46.1], [21.7, 41.6], [19.2, 42.8], [20.9, 42.6], [31.4, 49, "#505060"], [28, 53.5], [23.9, 55.3],
  [25, 56.9], [25.5, 58.7, "#c07a28", 0.7], [26.3, 64.5, "#7058c8", 0.6], [16.7, 62.8, "#2a6a80", 0.6], [15, 66, "#806a20", 0.3], [10, 56], [28.5, 47.2],
  [35.2, 39], [33.2, 35], [43.4, 42.2], [45, 40.3], [47.5, 40.3], [38.5, 35], [35.8, 33.9], [35, 31.4], [36.8, 31.2], [43.7, 33],
  [47.6, 29.3, "#b8c030", 0.6], [44.5, 24], [50.6, 26], [51.2, 25.3], [54.3, 23.9], [56, 20.6], [47.5, 15.9, "#2020a0", 0.6], [54.3, 32.6, "#30a048"],
  [66, 33.8], [69.4, 30], [67.3, 48.2, "#a03078", 0.6], [63, 41.8], [59.2, 39.1], [74.5, 41.5, "#a07830", 0.6], [71, 38.5], [79.6, 22.9, "#3080b0", 0.7],
  [84, 28.2], [90.4, 27.4], [90.3, 23.9, "#b02a90"], [80.7, 7.6, "#40b0a8", 0.6], [96.5, 21.2, "#803078"], [101, 15.1, "#a84020"], [105, 12.7, "#7a2aa0"], [103.7, 18.5, "#606868"],
  [106.3, 20, "#309070"], [101.9, 4.2, "#d02078", 0.6], [103.8, 1.4, "#5048a0"], [114.1, 22.4, "#2f9048", 0.6], [113.5, 22.2, "#2f9048", 0.6], [73.5, 3.2, "#48b81c", 0.3],
  [30, 26.6, "#602070"], [17.2, 27, "#2f68c0"], [9.6, 34.1], [2.6, 28.2], [-6.3, 31.9], [-13, 24.2], [-10.3, 20.3, "#2040a0"], [-3.5, 17.4], [9.4, 17.4],
  [18.6, 15.3, "#501020"], [30, 15.9, "#50a088", 0.6], [38.8, 15.4], [42.5, 11.7], [45.9, 6.1, "#484018"], [30.3, 7.3], [20.5, 6.6], [12.7, 5.7],
  [8, 9.6, "#304890"], [2.3, 9.6], [1, 8.5], [-1.2, 8], [-5.6, 7.6, "#309878"], [-9.3, 6.4, "#8888a0"], [-11.8, 8.6, "#5050c0"], [-11, 10.4], [-15, 12],
  [-15.4, 13.5, "#a06848"], [-14.5, 14.4], [-1.8, 12.3], [11.8, -0.6], [15.2, -0.8], [17.5, -12.3, "#101818"], [34.8, -6.3, "#282838"], [46.7, -19.4, "#202020"],
  [24, -29, "#141418"], [57.6, -20.3, "#141418"], [-90.4, 15.7, "#307a68"], [-88.7, 17.2, "#3ca020"], [-88.9, 13.7], [-86.6, 14.8, "#308868"],
  [-85, 12.9, "#402080"], [-84.2, 9.9, "#a08080"], [-80.1, 8.5, "#a85a20"], [-79, 21.6, "#a8801c"], [-77.3, 18.1, "#8a30c0"], [-72.7, 19, "#305080"],
  [-70.5, 18.9, "#306a38"], [-66.4, 18.2, "#909090", 0.7], [-76.6, 24.4, "#a02848"], [-62, 15.4, "#3080a0"], [-61, 13.9, "#2a70b8"],
  [-61.3, 10.4, "#5060c0"], [-59.5, 13.2, "#601838"], [-61.7, 12.1, "#3868b0"], [-53.2, 3.9, "#101010"], [-61.8, 17.1, "#3838a0"], [-69, 12.2, "#7a8020"], [-80.7, 19.3, "#a02058"],
];

const ORIGIN = [1135, 492.4];
const SWING = [105, -157];

function arc(lon: number, lat: number): string {
  const x = 709 + (lon + 180) * 5.377;
  const y = 714.2 - lat * 5.385;
  const cx = (ORIGIN[0] + x) / 2 + SWING[0];
  const cy = (ORIGIN[1] + y) / 2 + SWING[1];
  return `M${ORIGIN[0]} ${ORIGIN[1]}S${cx.toFixed(1)} ${cy.toFixed(1)} ${x.toFixed(1)} ${y.toFixed(1)}`;
}

const PALETTE = ["#7a7a80", "#3f9a48", "#5a35a8", "#3a8f90", "#a02870", "#6a3a28", "#3458a0", "#8a7ab8", "#706a30", "#28287e", "#4a9a78", "#7a2222", "#6070a8", "#8a8a60"];

const rows = (text: string) => text.trim().split("\n").filter(Boolean);

@customElement("world-map")
class WorldMap extends LitElement {
  static styles = css`
    :host { display: block; width: 1936px; height: 698px; }
    svg { display: block; width: 1936px; height: 698px; overflow: hidden; }
    .land { fill: #0a0b0d; stroke: #fff; }
    .sea { fill: #000; stroke: #fff; }
    .line { fill: none; stroke: #fff; }
    .shape { stroke-width: 2.7; stroke-linejoin: round; stroke-linecap: round; }
    .dot { fill: #fff; }
    .arc { fill: none; stroke-width: 1.2; }
  `;

  render() {
    seed = 7;
    const scribbles = rows(SCRIBBLES);
    return html`<svg viewBox="709 323 1936 698">
      <g class="shape">
        ${rows(LAND).map((r) => svg`<path class="land" d=${trace(r, true, 0.8)} />`)}
        ${rows(INLAND_SEA).map((r) => svg`<path class="sea" d=${trace(r, true, 0.8)} />`)}
        ${rows(STRAIGHT).map((r) => svg`<path class="line" d=${trace(r, false, 0)} />`)}
        ${rows(BORDERS).map((r) => svg`<path class="line" d=${trace(r, false, 0.6)} />`)}
        ${[...scribbles, ...scribbles].map((r) => svg`<path class="line" d=${trace(r, false, 1.5)} />`)}
      </g>
      ${rows(DOTS).map((r) => points(r).map((p) => svg`<circle class="dot" cx=${p[0]} cy=${p[1]} r="1.9" />`))}
      ${ROUTES.map(
        ([lon, lat, colour, strength], i) =>
          svg`<path class="arc" d=${arc(lon, lat)} stroke=${colour ?? PALETTE[(i * 5) % PALETTE.length]} stroke-opacity=${strength ?? 0.5} />`
      )}
    </svg>`;
  }
}

type Slice = { label: string; colour: string; from: number; to: number };

@customElement("half-chart")
class HalfChart extends LitElement {
  @property() heading = "";
  @property({ attribute: false }) slices: Slice[] = [];
  @property({ type: Number }) width = 1126;
  @property({ type: Number }) cx = 563;
  @property({ type: Number }) base = 387;
  @property({ type: Number }) outer = 363;
  @property({ type: Number }) inner = 0;

  static styles = css`
    :host { display: flex; flex-direction: column; color: #5a5a5a; font-size: 26.5px; line-height: 31px; }
    .heading { margin-top: 29px; height: 31px; text-align: center; font-weight: 700; font-size: 26.2px; }
    .legend { display: flex; justify-content: center; gap: 20.3px; margin-top: 41px; padding-right: 22px; height: 31px; white-space: nowrap; }
    .item { display: flex; gap: 10px; }
    .box { box-sizing: border-box; width: 93px; height: 31px; border: 2.5px solid #eee; }
    svg { display: block; height: 418px; }
    .slice { stroke: #fff; stroke-width: 4.4; stroke-linejoin: bevel; }
  `;

  private slicePath(s: Slice) {
    const at = (deg: number, r: number) => {
      const a = (deg * Math.PI) / 180;
      return `${(this.cx + r * Math.cos(a)).toFixed(2)} ${(this.base - r * Math.sin(a)).toFixed(2)}`;
    };
    const head = `M${at(s.from, this.outer)}A${this.outer} ${this.outer} 0 0 1 ${at(s.to, this.outer)}`;
    return this.inner
      ? `${head}L${at(s.to, this.inner)}A${this.inner} ${this.inner} 0 0 0 ${at(s.from, this.inner)}Z`
      : `${head}L${this.cx} ${this.base}Z`;
  }

  render() {
    return html`
      <div class="heading">${this.heading}</div>
      <div class="legend">
        ${this.slices.map((s) => html`<div class="item"><div class="box" style="background:${s.colour}"></div><span>${s.label}</span></div>`)}
      </div>
      <svg width=${this.width} height="418" viewBox="0 0 ${this.width} 418">
        ${this.slices.map((s) => svg`<path class="slice" fill=${s.colour} d=${this.slicePath(s)} />`)}
      </svg>
    `;
  }
}

@customElement("app-root")
class AppRoot extends LitElement {
  static styles = css`
    :host { display: block; background: #000; color: #fff; height: 1572px; font-family: "Liberation Sans", Arial, sans-serif; }
    .top { display: flex; flex-direction: column; align-items: center; padding-left: 143px; }
    h1 { margin: 0 0 5px; font-weight: 400; font-size: 87.6px; line-height: 91px; -webkit-text-stroke: 0.5px #fff; }
    .totals { display: flex; gap: 122px; }
    .totals, .country { font-size: 44px; line-height: 51px; -webkit-text-stroke: 0.5px #fff; }
    .years { display: flex; gap: 19px; margin: 43px 11px 11px 0; }
    button { box-sizing: border-box; width: 170px; height: 71px; padding: 0; border: 3px solid #fff; border-radius: 5px; background: #000; color: #fff; font: 35px/60px "Liberation Sans", Arial, sans-serif; -webkit-text-stroke: 0.5px #fff; }
    .charts { display: flex; justify-content: space-between; }
    .countries { width: 1126px; }
    .sex { width: 840px; }
  `;

  render() {
    const countries: Slice[] = [
      { label: "Mexico", colour: "#f94b72", from: 180, to: 73.3 },
      { label: "China", colour: "#3492e9", from: 73.3, to: 52.9 },
      { label: "India", colour: "#aa18e6", from: 52.9, to: 33.5 },
      { label: "Philippines", colour: "#fdc43f", from: 33.5, to: 15.9 },
      { label: "Puerto Rico", colour: "#51f966", from: 15.9, to: 0 },
    ];
    const sex: Slice[] = [
      { label: "Males", colour: "#36ffff", from: 180, to: 92.5 },
      { label: "Females", colour: "#faafc1", from: 92.5, to: 0 },
    ];
    return html`
      <div class="top">
        <h1>United States Immigration</h1>
        <div class="totals"><span>Total Immigrants: 48,178,877</span><span>Year: 2015</span></div>
        <div class="country">Brazil: 355,722</div>
        <div class="years">${[1990, 1995, 2000, 2005, 2010, 2015, 2017].map((y) => html`<button>${y}</button>`)}</div>
        <world-map></world-map>
      </div>
      <div class="charts">
        <half-chart class="countries" heading="Top 5 Countries" .slices=${countries} width="1126" cx="562.8" base="387.5" outer="363.8"></half-chart>
        <half-chart class="sex" heading="Sex" .slices=${sex} width="840" cx="420" base="398.5" outer="375" inner="187.5"></half-chart>
      </div>
    `;
  }
}
